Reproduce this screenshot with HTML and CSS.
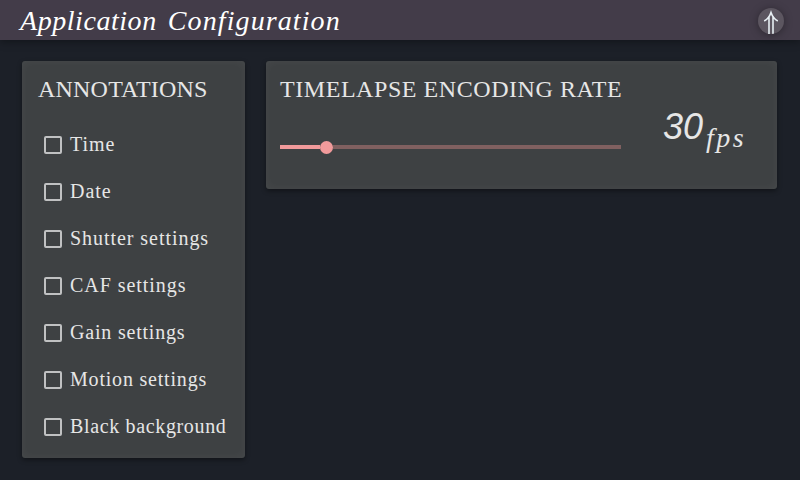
FILE: index.html
```html
<!DOCTYPE html>
<html lang="en">
<head>
<meta charset="utf-8">
<title>Application Configuration</title>
<link rel="stylesheet" href="styles.css">
</head>
<body>
<header class="topbar">
  <h1 class="title"><span class="narrow">Application</span> Configuration</h1>
  <button class="up" aria-label="Up"><svg viewBox="0 0 26 26" width="26" height="26"><path d="M11 26V8M15 26V8M6.200 13Q11 10.500 13 4.500Q15 10.500 19.800 13"/></svg></button>
</header>
<main class="content">
  <section class="card annotations">
    <h2 class="heading">ANNOTATIONS</h2>
    <label class="option"><input type="checkbox" class="box"><span class="loose">Time</span></label>
    <label class="option"><input type="checkbox" class="box"><span class="loose">Date</span></label>
    <label class="option"><input type="checkbox" class="box"><span class="loose">Shutter settings</span></label>
    <label class="option"><input type="checkbox" class="box"><span class="loose">CAF settings</span></label>
    <label class="option"><input type="checkbox" class="box"><span>Gain settings</span></label>
    <label class="option"><input type="checkbox" class="box"><span>Motion settings</span></label>
    <label class="option"><input type="checkbox" class="box"><span class="long">Black background</span></label>
  </section>
  <section class="card rate">
    <div class="control">
      <h2 class="heading wide">TIMELAPSE ENCODING RATE</h2>
      <div class="slider"><div class="fill"></div><div class="thumb"></div><div class="track"></div></div>
    </div>
    <div class="value"><span class="number">30</span><span class="unit">fps</span></div>
  </section>
</main>
</body>
</html>
```
FILE: styles.css
```css
* { box-sizing: border-box; }
body {
  margin: 0;
  height: 480px;
  overflow: hidden;
  background: #1c2028;
  color: #e6e6e6;
  font-family: "Liberation Serif", serif;
}
.topbar {
  display: flex;
  align-items: center;
  justify-content: space-between;
  height: 40px;
  padding: 0 16px 0 20px;
  background: #433c49;
  box-shadow: 0 2px 8px rgba(0, 0, 0, .35);
}
.title {
  margin: 0;
  font-size: 28px;
  font-style: italic;
  font-weight: 400;
  line-height: 41px;
  letter-spacing: 1.1px;
  word-spacing: 3px;
  color: #fff;
}
.title .narrow { letter-spacing: .55px; }
.up {
  width: 26px;
  height: 26px;
  margin-top: 2px;
  padding: 0;
  border: 0;
  border-radius: 50%;
  overflow: hidden;
  background: #5c5660;
  box-shadow: 0 1px 8px rgba(0, 0, 0, .35);
}
.up svg { display: block; fill: none; stroke: #e8f0f4; stroke-width: 1.6; }
.content {
  display: flex;
  align-items: flex-start;
  gap: 21px;
  padding: 21px 23px 0 22px;
}
.card {
  border-radius: 3px;
  background: #3e4143;
  box-shadow: 0 2px 5px rgba(0, 0, 0, .4), inset 0 0 8px rgba(255, 255, 255, .05);
}
.annotations { width: 223px; height: 397px; padding: 13px 0 0 16px; }
.heading {
  margin: 0;
  font-size: 24px;
  font-weight: 400;
  line-height: 30px;
  letter-spacing: .2px;
  white-space: nowrap;
}
.wide { letter-spacing: .56px; }
.annotations .heading { margin-bottom: 17px; }
.option {
  display: flex;
  align-items: center;
  height: 47px;
  padding-left: 6px;
  font-size: 20px;
  letter-spacing: .8px;
  white-space: nowrap;
}
.loose { letter-spacing: .95px; }
.long { letter-spacing: .65px; }
.box {
  appearance: none;
  width: 18px;
  height: 18px;
  margin: 1px 8px 0 0;
  border: 2px solid #c0c1c2;
  border-radius: 2px;
}
.rate {
  display: flex;
  flex: 1;
  height: 128px;
  padding: 13px 14px 0;
}
.control { width: 341px; }
.slider { display: flex; align-items: center; height: 14px; margin-top: 36px; }
.fill { width: 40px; height: 4px; background: #f19a9b; }
.thumb { width: 13px; height: 13px; border-radius: 50%; background: #f19a9b; }
.track { flex: 1; height: 4px; background: #806060; }
.value {
  display: flex;
  align-items: baseline;
  margin: 32px 0 0 42px;
  font-style: italic;
}
.number {
  font-family: "Liberation Sans", sans-serif;
  font-size: 36px;
}
.unit {
  position: relative;
  top: 8px;
  margin-left: 3px;
  font-size: 28px;
  letter-spacing: 2.5px;
}
```
